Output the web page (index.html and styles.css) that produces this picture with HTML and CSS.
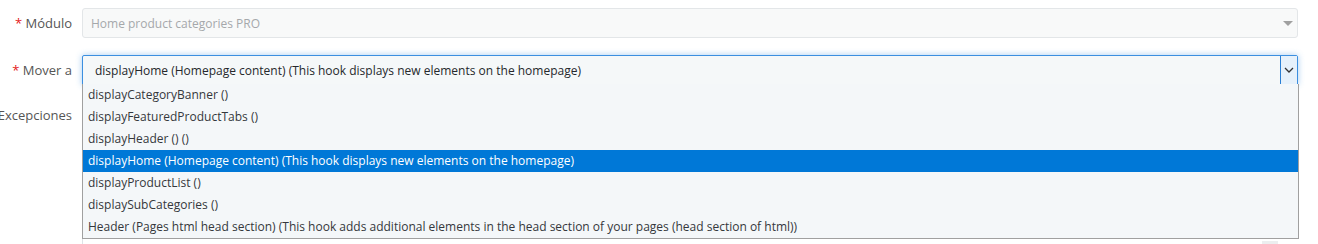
FILE: index.html
```html
<!DOCTYPE html>
<html>
<head>
  <meta charset="utf-8">
  <title>Transplantar módulo</title>
  <link rel="stylesheet" href="styles.css">
  <meta name="viewport" content="width=device-width, initial-scale=1.0">
</head>
<body>
  <div class="form">
    <div class="row">
      <label class="label"><span class="req">*</span> Módulo</label>
      <div class="field">
        <div class="select disabled">
          <span class="value">Home product categories PRO</span>
          <span class="caret"></span>
        </div>
      </div>
    </div>

    <div class="row">
      <label class="label"><span class="req">*</span> Mover a</label>
      <div class="field drop">
        <div class="select focused">
          <span class="value">displayHome (Homepage content) (This hook displays new elements on the homepage)</span>
          <span class="arrow">
            <svg width="10" height="6" viewBox="0 0 10 6"><path d="M1 1l4 4 4-4" fill="none" stroke="#333" stroke-width="1.3"/></svg>
          </span>
        </div>
        <ul class="options">
          <li>displayCategoryBanner ()</li>
          <li>displayFeaturedProductTabs ()</li>
          <li>displayHeader () ()</li>
          <li class="selected">displayHome (Homepage content) (This hook displays new elements on the homepage)</li>
          <li>displayProductList ()</li>
          <li>displaySubCategories ()</li>
          <li>Header (Pages html head section) (This hook adds additional elements in the head section of your pages (head section of html))</li>
        </ul>
      </div>
    </div>

    <div class="row">
      <label class="label label-wide">Excepciones</label>
      <div class="field">
        <div class="exceptions">
          <span class="mini"></span>
        </div>
      </div>
    </div>
  </div>
</body>
</html>
```

FILE: styles.css
```css
body {
  margin: 0;
  background-color: #ffffff;
  font-family: "Open Sans", "Liberation Sans", sans-serif;
  color: #363a41;
  overflow: hidden;
}
.form {
  padding-top: 8px;
  display: flex;
  flex-direction: column;
  gap: 17px;
}
.row {
  display: flex;
  align-items: flex-start;
  gap: 10px;
}
.label {
  width: 72px;
  flex: none;
  text-align: right;
  font-size: 13px;
  line-height: 30px;
  color: #555555;
  white-space: nowrap;
}
.label-wide {
  direction: rtl;
  line-height: 26px;
}
.req {
  color: #e31919;
}
.field {
  width: 1216px;
}
.drop {
  position: relative;
}
.select {
  height: 30px;
  box-sizing: border-box;
  border: 1px solid #e3e6e8;
  border-radius: 3px;
  display: flex;
  align-items: center;
  font-size: 12px;
}
.select.disabled {
  background-color: #f8f9f9;
  color: #a5a8ab;
  padding-left: 8px;
}
.select.disabled .value {
  flex: 1;
}
.caret {
  width: 0;
  height: 0;
  border-left: 5px solid transparent;
  border-right: 5px solid transparent;
  border-top: 5px solid #a0a0a0;
  margin-right: 4px;
}
.select.focused {
  background-color: #f5f8f9;
  border-color: #3c8fe0;
  border-radius: 2px 2px 0 0;
  box-shadow: 0 0 6px rgba(60, 143, 224, 0.45);
  padding-left: 12px;
  color: #25282c;
}
.select.focused .value {
  flex: 1;
}
.arrow {
  width: 17px;
  height: 28px;
  box-sizing: border-box;
  border-left: 1px solid #2a7fd4;
  background-color: #e6f1fb;
  display: flex;
  align-items: center;
  justify-content: center;
}
.options {
  position: absolute;
  top: 29px;
  left: 0;
  right: -1px;
  margin: 0;
  padding: 0;
  list-style: none;
  background-color: #f4f7f9;
  border: 1px solid #a0a0a0;
  border-top: none;
  font-size: 12px;
  color: #35383c;
  z-index: 2;
}
.options li {
  height: 22px;
  line-height: 22px;
  padding-left: 5px;
  white-space: nowrap;
}
.options li.selected {
  background-color: #0078d7;
  color: #ffffff;
}
.exceptions {
  height: 143px;
  border-left: 1px solid #dde3e7;
  position: relative;
}
.mini {
  position: absolute;
  top: 139px;
  right: 20px;
  width: 16px;
  height: 4px;
  background-color: #eceeef;
}
```
